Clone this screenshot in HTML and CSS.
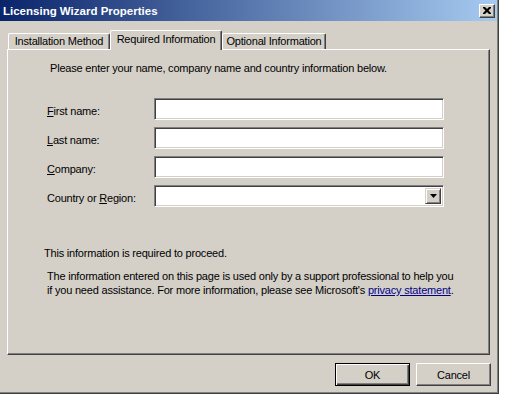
FILE: index.html
```html
<!DOCTYPE html>
<html>
<head>
<meta charset="utf-8">
<link rel="stylesheet" href="styles.css">
</head>
<body>
<div class="window">
  <div class="titlebar">
    <span class="title">Licensing Wizard Properties</span>
    <span class="close"><svg width="8" height="7" viewBox="0 0 8 7"><path d="M0 0h2l2 2 2-2h2v1l-2.5 2.5L8 6v1H6L4 5 2 7H0V6l2.5-2.5L0 1z" fill="#000"/></svg></span>
  </div>
  <div class="client">
    <div class="tabs">
      <div class="tab first">Installation Method</div>
      <div class="tab selected">Required Information</div>
      <div class="tab last">Optional Information</div>
    </div>
    <div class="panel">
      <p class="intro">Please enter your name, company name and country information below.</p>
      <div class="form">
        <label class="label"><u>F</u>irst name:</label>
        <div class="field"></div>
        <label class="label"><u>L</u>ast name:</label>
        <div class="field"></div>
        <label class="label"><u>C</u>ompany:</label>
        <div class="field"></div>
        <label class="label">Country or <u>R</u>egion:</label>
        <div class="field combo"><span class="arrow"><svg width="7" height="4" viewBox="0 0 7 4"><path d="M0 0h7L3.5 4z" fill="#000"/></svg></span></div>
      </div>
      <p class="required">This information is required to proceed.</p>
      <p class="note">The information entered on this page is used only by a support professional to help you<br>if you need assistance. For more information, please see Microsoft's <a href="#" class="link">privacy statement</a>.</p>
    </div>
    <div class="buttons">
      <div class="btn default"><span>OK</span></div>
      <div class="btn">Cancel</div>
    </div>
  </div>
</div>
</body>
</html>
```
FILE: styles.css
```css
html, body {
  margin: 0;
  padding: 0;
  background: #ffffff;
}
body {
  font-family: "Liberation Sans", Arial, sans-serif;
  font-size: 11px;
  letter-spacing: -0.2px;
  color: #000;
}
.window {
  width: 498px;
  height: 393px;
  background: #d4d0c8;
  border-right: 1px solid #404040;
  border-bottom: 1px solid #404040;
  box-shadow: inset -1px -1px 0 #808080;
  display: flex;
  flex-direction: column;
}
.titlebar {
  height: 21px;
  margin-right: 1px;
  background: linear-gradient(to right, #0a246a, #a6caf0);
  display: flex;
  align-items: center;
  justify-content: space-between;
  padding: 0 2px 0 3px;
}
.title {
  color: #fff;
  font-weight: bold;
  font-family: "Liberation Sans", Arial, sans-serif;
  font-size: 11.5px;
  letter-spacing: 0;
}
.close {
  width: 16px;
  height: 14px;
  box-sizing: border-box;
  background: #d4d0c8;
  border-top: 1px solid #fff;
  border-left: 1px solid #fff;
  border-right: 1px solid #404040;
  border-bottom: 1px solid #404040;
  box-shadow: inset -1px -1px 0 #808080;
  display: flex;
  align-items: center;
  justify-content: center;
}
.client {
  padding: 8px 0 0 7px;
  display: flex;
  flex-direction: column;
}
.tabs {
  display: flex;
  align-items: flex-end;
  height: 20px;
  padding-left: 1px;
  position: relative;
  z-index: 1;
}
.tab {
  height: 16px;
  box-sizing: border-box;
  white-space: nowrap;
  text-align: center;
  border-top: 1px solid #fff;
  border-left: 1px solid #fff;
  border-right: 1px solid #404040;
  border-radius: 2px 2px 0 0;
  box-shadow: inset -1px 0 0 #808080;
  line-height: 15px;
}
.tab.first {
  width: 102px;
}
.tab.selected {
  height: 20px;
  width: 112px;
  margin-bottom: -1px;
  background: #d4d0c8;
  line-height: 16px;
}
.tab.last {
  width: 104px;
}
.panel {
  width: 483px;
  height: 306px;
  box-sizing: border-box;
  border-top: 1px solid #fff;
  border-left: 1px solid #fff;
  border-right: 1px solid #404040;
  border-bottom: 1px solid #404040;
  box-shadow: inset -1px -1px 0 #808080;
  padding: 12px 0 0 0;
}
.intro {
  margin: 0 0 0 42px;
  line-height: 13px;
}
.form {
  margin: 23px 0 0 39px;
  display: grid;
  grid-template-columns: 107px 290px;
  grid-auto-rows: 22px;
  row-gap: 7px;
  align-items: center;
}
.label {
  padding-top: 3px;
}
.field {
  height: 22px;
  box-sizing: border-box;
  background: #fff;
  border-top: 1px solid #808080;
  border-left: 1px solid #808080;
  border-right: 1px solid #fff;
  border-bottom: 1px solid #fff;
  box-shadow: inset 1px 1px 0 #404040, inset -1px -1px 0 #d4d0c8;
}
.combo {
  display: flex;
  justify-content: flex-end;
  align-items: stretch;
  padding: 2px;
}
.arrow {
  width: 16px;
  box-sizing: border-box;
  background: #d4d0c8;
  border-top: 1px solid #d4d0c8;
  border-left: 1px solid #d4d0c8;
  border-right: 1px solid #404040;
  border-bottom: 1px solid #404040;
  box-shadow: inset 1px 1px 0 #fff, inset -1px -1px 0 #808080;
  display: flex;
  align-items: center;
  justify-content: center;
}
.required {
  margin: 40px 0 0 36px;
  line-height: 13px;
}
.note {
  margin: 9px 0 0 39px;
  line-height: 14px;
}
.link {
  color: #00008b;
}
.buttons {
  display: flex;
  justify-content: flex-end;
  gap: 6px;
  margin-top: 8px;
  padding-right: 7px;
}
.btn {
  width: 75px;
  height: 23px;
  box-sizing: border-box;
  border-top: 1px solid #fff;
  border-left: 1px solid #fff;
  border-right: 1px solid #404040;
  border-bottom: 1px solid #404040;
  box-shadow: inset -1px -1px 0 #808080;
  display: flex;
  align-items: center;
  justify-content: center;
}
.btn.default {
  border: 1px solid #000;
  box-shadow: inset 1px 1px 0 #fff, inset -1px -1px 0 #404040, inset -2px -2px 0 #808080;
}
```
